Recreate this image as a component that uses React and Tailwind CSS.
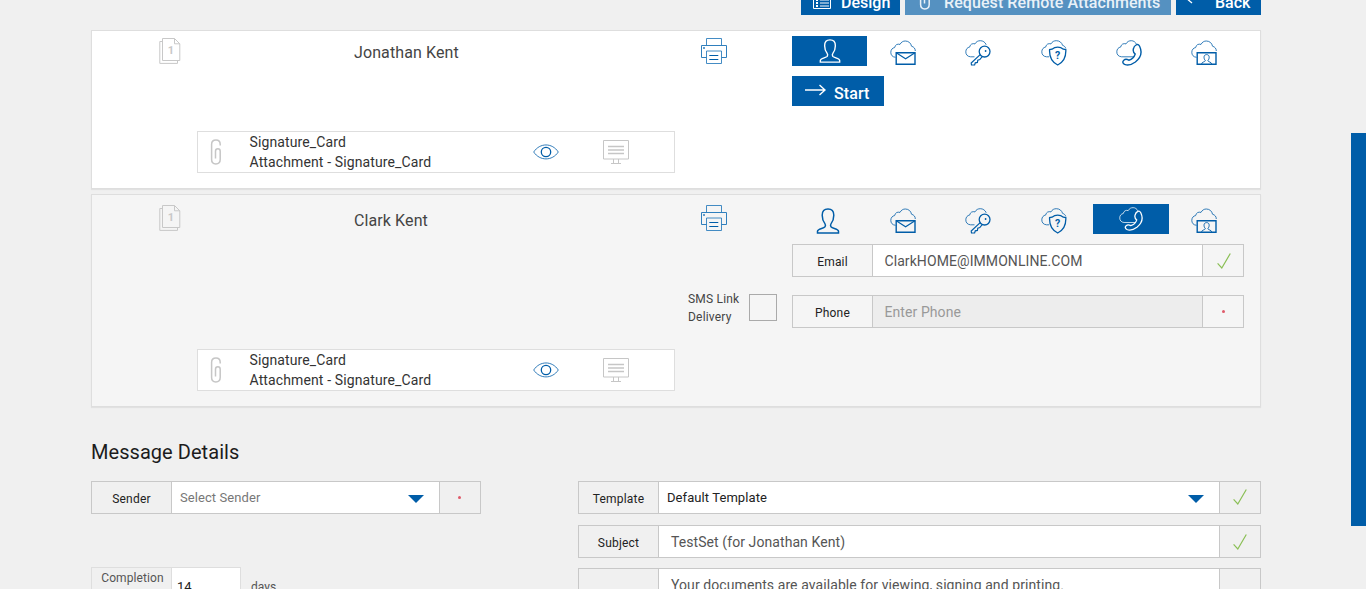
import React, { useState } from 'react';
import clsx from 'clsx';

const CLOUD = 'M5.5 17.3 C2.3 17 .8 15 .8 12.3 C.8 9.7 2.5 7.8 4.6 7.6 C5.2 4.6 7.6 3.6 10 4.4 C11.2 2 13.2 1 15.3 1 C18.6 1 21 3.2 21.5 6.2 C24 6.9 25.3 8.6 25.3 11';

const Icon = ({ width = 26, height = 26, className, children }) => (
    <svg
        width={width}
        height={height}
        viewBox={`0 0 ${width} ${height}`}
        fill="none"
        stroke="currentColor"
        className={clsx('shrink-0', className)}
    >
        {children}
    </svg>
);

const PersonShape = () => (
    <path
        strokeWidth="1.5"
        d="M2.5 25 V23.3 C2.5 20.6 8.4 20.6 10 18.8 C10.7 17.6 10.5 16.4 9.9 15.6 C8.2 13.4 7.2 11 7.2 7.2 C7.2 3 9.6 1 13 1 C16.4 1 18.8 3 18.8 7.2 C18.8 11 17.8 13.4 16.1 15.6 C15.5 16.4 15.3 17.6 16 18.8 C17.6 20.6 23.5 20.6 23.5 23.3 V25 Z"
    />
);

const MailShape = () => (
    <>
        <path strokeWidth="0.8" d={CLOUD} />
        <path strokeWidth="1.4" d="M6.2 12.7 H25 V24.3 H6.2 Z" />
        <path strokeWidth="1.1" d="M6.2 12.7 L15.6 18.8 L25 12.7" />
    </>
);

const KeyShape = () => (
    <>
        <path strokeWidth="0.8" d="M9.5 16.8 H5.5 C2.3 16.5 .8 14.5 .8 11.8 C.8 9.2 2.5 7.3 4.6 7.1 C5.2 4.1 7.6 3.1 10 3.9 C11.2 1.5 13.2 .7 15.3 .7 C18 .7 20.2 2.2 21.2 4.8" />
        <circle cx="19.6" cy="11.6" r="5.4" strokeWidth="1.3" />
        <circle cx="20.6" cy="11" r="0.9" fill="currentColor" stroke="none" />
        <path strokeWidth="1.2" d="M15.2 14.6 L6.2 23 L6.5 25 H9.6 L10.3 22.8 L12.4 22.4 L12.8 20.2 L14.8 19.6 L17.2 16.6" />
    </>
);

const ShieldShape = () => (
    <>
        <path strokeWidth="0.8" d="M8 16.8 H5.5 C2.3 16.5 .8 14.5 .8 11.8 C.8 9.2 2.5 7.3 4.6 7.1 C5.2 4.1 7.6 3.1 10 3.9 C11.2 1.5 13.2 .7 15.3 .7 C18.6 .7 20.8 2.6 21.6 5.4 C23.2 5.8 24.4 7 24.8 8.4" />
        <path strokeWidth="1.3" d="M16.7 7.2 C14.8 7.2 13.2 7.4 11 9.2 L8.6 9.6 C8.2 17 10.4 22 16.7 25 C23 22 25.2 17 24.8 9.6 L22.4 9.2 C20.2 7.4 18.6 7.2 16.7 7.2 Z" />
        <text x="16.7" y="19.4" textAnchor="middle" fontSize="10.5" fontWeight="700" fill="currentColor" stroke="none">?</text>
    </>
);

const PhoneShape = () => (
    <>
        <path strokeWidth="0.8" d="M18 16.8 H5.5 C2.3 16.5 .8 14.5 .8 11.8 C.8 9.2 2.5 7.3 4.6 7.1 C5.2 4.1 7.6 3.1 10 3.9 C11.2 1.5 13.2 .7 15.3 .7 C17.6 .7 19.4 2 20.4 4.2" />
        <path strokeWidth="1.4" d="M20 5 C21.6 4 22.8 4.6 23.6 6.2 C26.6 12.4 24.4 18 19.4 22 C15.6 24.8 11.6 25.6 8.6 24.4 C6.6 23.4 6.2 21.6 7.8 20.2 C9.4 18.8 11.4 19.4 12.8 20.2 C15.8 19.4 18.2 17.2 19.2 14 C17.6 12.8 16.8 11 17.4 8.8 C17.8 7 18.6 5.8 20 5 Z" />
    </>
);

const VideoShape = () => (
    <>
        <path strokeWidth="0.8" d={CLOUD} />
        <path strokeWidth="1.4" d="M6.2 12.7 H25 V24.3 H6.2 Z" />
        <path strokeWidth="0.9" d="M10.6 24 C10.6 22 13.8 22 14.4 20.8 C12.4 18.4 12.4 14.6 15.6 14.6 C18.8 14.6 18.8 18.4 16.8 20.8 C17.4 22 20.6 22 20.6 24" />
    </>
);

const methods = [
    { id: 'inPerson', Shape: PersonShape },
    { id: 'email', Shape: MailShape },
    { id: 'key', Shape: KeyShape },
    { id: 'question', Shape: ShieldShape },
    { id: 'phone', Shape: PhoneShape },
    { id: 'video', Shape: VideoShape },
];

const PagesIcon = () => (
    <Icon width={22} height={26} className="text-[#c8c8c8]">
        <path d="M3.5 .5 H15.5 L20.8 5.8 V22.5 H3.5 Z M15.5 .5 V5.8 H20.8" />
        <path d="M3.5 3.5 H.8 V25.4 H18.5 V22.5" />
        <text x="12" y="16" textAnchor="middle" fontSize="11" fontWeight="700" fill="currentColor" stroke="none">1</text>
    </Icon>
);

const PrinterIcon = () => (
    <Icon className="text-[#2f7fbd]">
        <path d="M5.5 7.5 V.5 H20.5 V7.5" strokeWidth="0.9" />
        <path d="M5.5 19.5 H.5 V7.5 H25.5 V19.5 H20.5" />
        <path d="M5.5 13 H20.5 V25.5 H5.5 Z" strokeWidth="0.9" />
        <path d="M8.3 17.5 H17.3 M8.3 21.5 H17.3" className="text-[#005da8]" stroke="currentColor" strokeWidth="1.2" />
        <path d="M2 10 H4" strokeWidth="1.5" />
    </Icon>
);

const ClipIcon = ({ className }) => (
    <Icon width={12} height={26} className={className}>
        <path
            strokeWidth="1.5"
            d="M10.2 6.5 V5.2 C10.2 2.4 8.4 .9 6 .9 C3.4 .9 1.6 2.6 1.6 5.2 V20.6 C1.6 23.4 3.4 25 5.8 25 C8.4 25 10.2 23.4 10.2 20.6 V12.2 C10.2 10.6 9.3 9.7 7.9 9.7 C6.5 9.7 5.5 10.6 5.5 12.2 V19.5"
        />
    </Icon>
);

const EyeIcon = () => (
    <Icon height={16} className="text-[#005da8]">
        <path strokeWidth="0.8" d="M.7 8 C6.8 -1.4 19.2 -1.4 25.3 8 C19.2 17.2 6.8 17.2 .7 8 Z" />
        <circle cx="13" cy="8" r="4.7" strokeWidth="1.3" />
    </Icon>
);

const MonitorIcon = () => (
    <Icon height={25} className="text-[#c6c6c6]">
        <path d="M.5 .5 H25.5 V19 H.5 Z M10.5 19 V23.5 M15.5 19 V23.5 M8 23.5 H18" />
        <path d="M5 6.5 H21 M5 10 H21 M5 13.5 H21" strokeWidth="1.3" />
    </Icon>
);

const Check = () => (
    <Icon width={14} height={16} className="text-[#8abf55]">
        <path d="M.6 10.4 L4.8 15 L13.3 .5" strokeWidth="1.2" />
    </Icon>
);

const Status = ({ valid }) => (valid ? <Check /> : <span className="size-[3px] rounded-full bg-[#df5a6a]" />);

const Field = ({ label, valid, disabled, className, statusClass, children }) => (
    <div className={clsx('flex h-[33px] border border-[#c8c8c8]', className)}>
        <div className="flex w-20 items-center justify-center border-r border-[#c8c8c8] pt-0.5 text-[12px] tracking-[0.2px] text-[#222]">
            {label}
        </div>
        <div
            className={clsx(
                'flex flex-1 items-center border-r border-[#c8c8c8] text-sm tracking-[0.08px]',
                disabled ? 'bg-[#ededed] text-[#999]' : 'bg-white text-[#555]'
            )}
        >
            {children}
        </div>
        <div className={clsx('flex w-10 items-center justify-center', statusClass)}>
            <Status valid={valid} />
        </div>
    </div>
);

const Caret = () => (
    <Icon width={16} height={8} className="mt-0.5 text-[#005da8]">
        <path d="M0 0 H16 L8 8 Z" fill="currentColor" stroke="none" />
    </Icon>
);

const Attachment = ({ title, detail }) => (
    <div className="ml-[105px] flex h-[42px] w-[478px] items-center border border-[#dedede] bg-white">
        <ClipIcon className="ml-3 text-[#c6c6c6]" />
        <div className="ml-[27.5px] w-[283px] text-[14px] leading-5 tracking-[0.12px] text-[#333]">
            <div>{title}</div>
            <div>{detail}</div>
        </div>
        <EyeIcon />
        <div className="ml-[44.5px]">
            <MonitorIcon />
        </div>
    </div>
);

const MethodBar = ({ active, onSelect }) => (
    <div className="grid grid-cols-6">
        {methods.map(({ id, Shape }) => {
            const isActive = id === active;
            return (
                <button
                    key={id}
                    onClick={() => onSelect(id)}
                    className={clsx(
                        'flex h-[30px] items-center justify-center',
                        isActive ? 'bg-[#005da8] text-white' : 'pt-1 pr-1 text-[#005da8]'
                    )}
                >
                    <svg
                        width={isActive ? 24 : 26}
                        height={isActive ? 24 : 26}
                        viewBox="0 0 26 26"
                        fill="none"
                        stroke="currentColor"
                        className="shrink-0"
                    >
                        <Shape />
                    </svg>
                </button>
            );
        })}
    </div>
);

const SignerCard = ({ name, defaultMethod, className, iconClass, bodyClass, side, children }) => {
    const [method, setMethod] = useState(defaultMethod);

    return (
        <div className={clsx('flex border border-[#dedede] shadow-[0_1px_1px_rgba(0,0,0,0.06)]', className)}>
            <div className="flex w-[583px] flex-col justify-between pb-[15px]">
                <div className="flex items-start pl-[67px]">
                    <div className={iconClass}>
                        <PagesIcon />
                    </div>
                    <div className={clsx('ml-[173px] text-[16px] tracking-[0.1px] text-[#444]', bodyClass)}>
                        <span className="block pt-1 leading-[26px]">{name}</span>
                    </div>
                </div>
                <Attachment title="Signature_Card" detail="Attachment - Signature_Card" />
            </div>
            <div className="w-[117px]">
                <div className={clsx('pl-[25.5px]', iconClass)}>
                    <PrinterIcon />
                </div>
                {side}
            </div>
            <div className={clsx('w-[452px]', bodyClass)}>
                <MethodBar active={method} onSelect={setMethod} />
                {children}
            </div>
        </div>
    );
};

const App = () => {
    return (
        <div className="flex h-[589px] w-[1366px] overflow-hidden bg-[#f0f0f0] font-['Roboto',sans-serif]">
            <main className="ml-[91px] w-[1170px]">
                <div className="flex h-[15px] items-end justify-end gap-[5px] overflow-hidden text-[16px] font-medium text-white">
                    <button className="flex h-[30px] w-[99px] shrink-0 items-center bg-[#005da8] pl-3">
                        <Icon width={18} height={16} className="mt-2">
                            <path d="M.5 .5 H17.5 V12.5 H.5 Z M7 4 H16 M7 7 H16 M7 10 H16" />
                            <path d="M3 4 H5 M3 7 H5 M3 10 H5" strokeWidth="2" />
                        </Icon>
                        <span className="ml-[10px] pt-1.5">Design</span>
                    </button>
                    <button className="flex h-[30px] w-[266px] shrink-0 items-center bg-[#5591c1] pl-[14px] tracking-[0.08px] text-[#e9f1f8]">
                        <ClipIcon className="mb-1.5" />
                        <span className="ml-[13px] pt-1.5">Request Remote Attachments</span>
                    </button>
                    <button className="flex h-[30px] w-[85px] shrink-0 items-center bg-[#005da8] pl-[9px]">
                        <Icon width={20} height={12} className="mb-1">
                            <path d="M7 1 L1 6 L7 11 M1 6 H20" strokeWidth="1.3" />
                        </Icon>
                        <span className="ml-[10px] pt-1.5">Back</span>
                    </button>
                </div>

                <SignerCard
                    name="Jonathan Kent"
                    defaultMethod="inPerson"
                    className="mt-[15px] h-[159px] bg-white"
                    iconClass="pt-[7px]"
                    bodyClass="pt-[5px]"
                >
                    <button className="mt-[10px] flex h-[30px] w-[92px] items-center bg-[#005da8] pl-[13px] text-white">
                        <Icon width={21} height={12} className="mb-0.5">
                            <path d="M0 6 H20 M14.5 1 L20 6 L14.5 11" strokeWidth="1.4" />
                        </Icon>
                        <span className="ml-2 pt-1.5 text-[16px] font-medium tracking-[0.1px]">Start</span>
                    </button>
                </SignerCard>

                <SignerCard
                    name="Clark Kent"
                    defaultMethod="phone"
                    className="mt-[5px] h-[213px] bg-[#f5f5f5]"
                    iconClass="pt-[10px]"
                    bodyClass="pt-[9px]"
                    side={
                        <label className="mt-[58px] flex items-center pl-[13px] text-[12px] leading-[18px] tracking-[0.2px] text-[#444]">
                            <span className="w-[61px] pt-px">SMS Link Delivery</span>
                            <span className="h-[27px] w-7 border border-[#aaa]" />
                        </label>
                    }
                >
                    <Field label="Email" valid className="mt-[10px]" statusClass="pl-px">
                        <span className="pl-[11.5px]">ClarkHOME@IMMONLINE.COM</span>
                    </Field>
                    <Field label="Phone" disabled className="mt-[18px]">
                        <span className="pl-[11.5px]">Enter Phone</span>
                    </Field>
                </SignerCard>

                <h2 className="mt-[31px] text-[20px] leading-7 tracking-[0.05px] text-[#1c1c1c]">Message Details</h2>

                <div className="mt-[15px] flex justify-between">
                    <div className="w-[390px]">
                        <Field label="Sender" statusClass="pr-px pb-px">
                            <div className="flex w-full items-center justify-between pt-px pr-[15px] pl-2 text-[13px] text-[#777]">
                                <span>Select Sender</span>
                                <Caret />
                            </div>
                        </Field>
                        <div className="mt-[53px] flex text-[#555]">
                            <div className="flex h-[40px] w-[150px] border border-[#dedede]">
                                <div className="w-20 border-r border-[#dedede] pt-px pl-0.5 text-center text-[12px] leading-[18px] tracking-[0.1px]">
                                    Completion
                                </div>
                                <div className="flex-1 bg-white pt-[9px] pl-[5px] text-[13px] leading-5 text-[#222]">14</div>
                            </div>
                            <span className="pt-[11px] pl-[10px] text-[12px] leading-[18px]">days</span>
                        </div>
                    </div>

                    <div className="flex w-[683px] flex-col">
                        <Field label="Template" valid statusClass="pr-px pb-0.5">
                            <div className="flex w-full items-center justify-between pt-px pr-[15px] pl-2 text-[13px] text-[#222]">
                                <span>Default Template</span>
                                <Caret />
                            </div>
                        </Field>
                        <Field label="Subject" valid className="mt-[11px]" statusClass="pr-px">
                            <span className="pl-3">TestSet (for Jonathan Kent)</span>
                        </Field>
                        <div className="mt-[10px] flex h-20 border border-[#c8c8c8] text-sm tracking-[0.08px] text-[#555]">
                            <div className="w-20 border-r border-[#c8c8c8]" />
                            <div className="flex-1 border-r border-[#c8c8c8] bg-white pt-[6px] pl-3">
                                Your documents are available for viewing, signing and printing.
                            </div>
                            <div className="w-10" />
                        </div>
                    </div>
                </div>
            </main>

            <aside className="mt-[133px] ml-auto h-[393px] w-[15px] bg-[#005da8]" />
        </div>
    );
};

export default App;
